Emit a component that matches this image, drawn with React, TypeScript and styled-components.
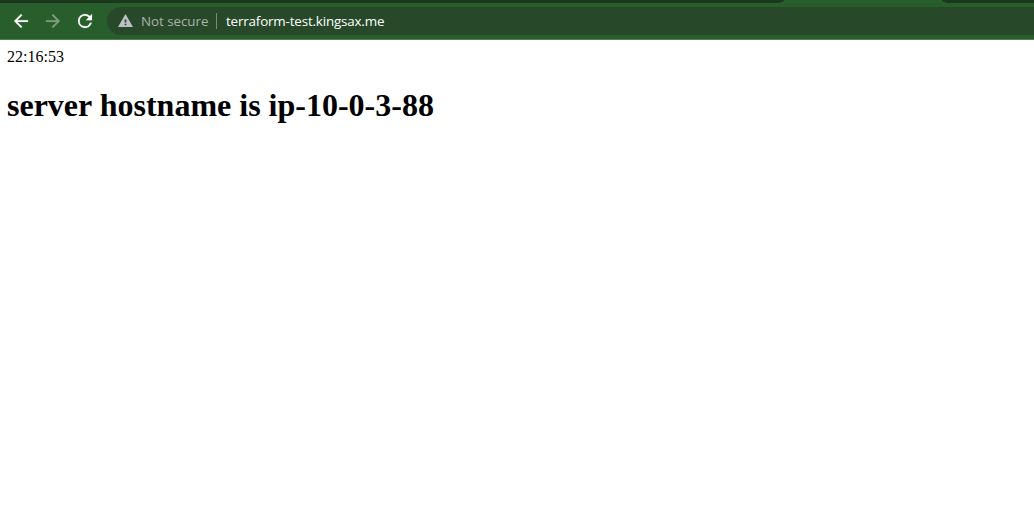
import React from "react";
import styled, { createGlobalStyle } from "styled-components";

const GlobalStyle = createGlobalStyle`
  html, body { margin: 0; padding: 0; background: #fff; overflow: hidden; }
`;

const Window = styled.div`
  display: flex;
  flex-direction: column;
  width: 100%;
  height: 100vh;
`;

const TabStrip = styled.div`
  display: flex;
  justify-content: space-between;
  flex: none;
  height: 3px;
  background: #285e2b;
`;

const InactiveTabs = styled.div<{ $width: number; $side: "left" | "right" }>`
  width: ${(p) => p.$width}px;
  background: #1b381c;
  border-radius: ${(p) => (p.$side === "left" ? "0 0 7px 0 / 0 0 3px 0" : "0 0 0 7px / 0 0 0 3px")};
`;

const Toolbar = styled.header`
  display: flex;
  align-items: center;
  flex: none;
  box-sizing: border-box;
  height: 37px;
  padding-left: 14px;
  background: #285e2b;
  border-bottom: 1px solid #53804f;
`;

const NavButton = styled.button<{ $disabled?: boolean; $gap: number }>`
  display: flex;
  flex: none;
  width: 14px;
  height: 14px;
  margin: 0 ${(p) => p.$gap}px 0 0;
  padding: 0;
  border: 0;
  background: none;
  color: ${(p) => (p.$disabled ? "#7f9f80" : "#fff")};
`;

const Glyph = styled.svg`
  display: block;
  width: 100%;
  height: 100%;
  fill: currentColor;
  stroke: currentColor;
  stroke-width: 0.2;
  overflow: visible;
`;

const AddressBar = styled.div`
  display: flex;
  align-items: center;
  flex: 1;
  height: 28px;
  padding-left: 11px;
  border-radius: 14px 0 0 14px;
  background: #27492a;
  font: 13.4px/28px "Open Sans", "Noto Sans", sans-serif;
  white-space: nowrap;
`;

const WarningIcon = styled.svg`
  flex: none;
  width: 15px;
  height: 13px;
  margin-right: 8px;
  position: relative;
  top: -0.5px;
  fill: #bdc1c6;
`;

const Security = styled.span`
  width: 75px;
  color: #a9b1aa;
  letter-spacing: -0.05px;
`;

const Divider = styled.span`
  width: 1px;
  height: 16px;
  margin-right: 9px;
  background: #788b79;
`;

const Url = styled.span`
  color: #fff;
  letter-spacing: -0.17px;
`;

const Page = styled.main`
  flex: 1;
  padding: 8px 7px;
  color: #000;
  font: 16px/18px "Liberation Serif", "Times New Roman", serif;
`;

const Time = styled.div`
  height: 18px;
`;

const Heading = styled.h1`
  margin: 21px 0 0;
  font-size: 32px;
  line-height: 37px;
  font-weight: 700;
`;

export default function App() {
  return (
    <Window>
      <GlobalStyle />
      <TabStrip>
        <InactiveTabs $width={784} $side="left" />
        <InactiveTabs $width={92} $side="right" />
      </TabStrip>
      <Toolbar>
        <NavButton $gap={18} aria-label="Back">
          <Glyph viewBox="4 4 16 16">
            <path d="M20 11H7.83l5.59-5.59L12 4l-8 8 8 8 1.41-1.41L7.83 13H20v-2z" />
          </Glyph>
        </NavButton>
        <NavButton $gap={18} $disabled aria-label="Forward">
          <Glyph viewBox="4 4 16 16">
            <path d="M12 4l-1.41 1.41L16.17 11H4v2h12.17l-5.58 5.59L12 20l8-8z" />
          </Glyph>
        </NavButton>
        <NavButton $gap={15} aria-label="Reload">
          <Glyph viewBox="4 4 16 16">
            <path d="M17.65 6.35A7.96 7.96 0 0 0 12 4a8 8 0 1 0 7.73 10h-2.08A6 6 0 1 1 12 6c1.66 0 3.14.69 4.22 1.78L13 11h7V4l-2.35 2.35z" />
          </Glyph>
        </NavButton>
        <AddressBar>
          <WarningIcon viewBox="1 2 22 19" preserveAspectRatio="none">
            <path d="M1 21h22L12 2 1 21zm12.3-2.6h-2.6v-2.2h2.6v2.2zm0-4h-2.6V10h2.6v4.4z" />
          </WarningIcon>
          <Security>Not secure</Security>
          <Divider />
          <Url>terraform-test.kingsax.me</Url>
        </AddressBar>
      </Toolbar>
      <Page>
        <Time>22:16:53</Time>
        <Heading>server hostname is ip-10-0-3-88</Heading>
      </Page>
    </Window>
  );
}
